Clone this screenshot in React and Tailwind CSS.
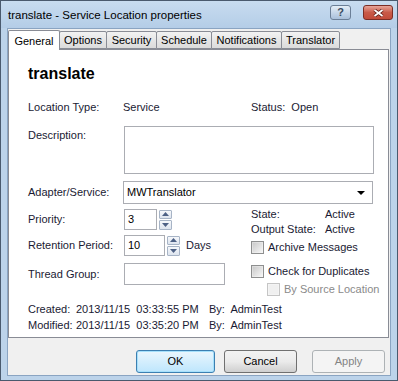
import React from 'react';

const font = { fontFamily: '"Liberation Sans", Arial, sans-serif' };

function Spinner() {
    return (
        <div className="flex flex-col ml-[2px] h-[20px] w-[13px] gap-[1px] shrink-0">
            <div className="flex-1 border border-[#a7b4c6] bg-gradient-to-b from-[#f6f8fb] to-[#dde4ee] flex items-center justify-center rounded-[1px]">
                <svg width="7" height="4" viewBox="0 0 7 4"><path d="M0 4 L3.5 0 L7 4 Z" fill="#4d6185" /></svg>
            </div>
            <div className="flex-1 border border-[#a7b4c6] bg-gradient-to-b from-[#f6f8fb] to-[#dde4ee] flex items-center justify-center rounded-[1px]">
                <svg width="7" height="4" viewBox="0 0 7 4"><path d="M0 0 L3.5 4 L7 0 Z" fill="#4d6185" /></svg>
            </div>
        </div>
    );
}

function Checkbox({ disabled }) {
    return (
        <div className={`w-[13px] h-[13px] shrink-0 border ${disabled ? 'border-[#c5c5c5] bg-[#f4f4f4]' : 'border-[#8e8f8f] bg-gradient-to-br from-[#d8d8d8] to-[#f8f8f8]'} p-[1px]`}>
            <div className={`w-full h-full ${disabled ? 'bg-[#f0f0f0]' : 'bg-gradient-to-br from-[#cbcbcb] to-[#f4f4f4]'}`}></div>
        </div>
    );
}

function Tab({ label, selected, width }) {
    if (selected) {
        return (
            <div className="h-[20px] -mb-[1px] border border-b-0 border-[#898c95] bg-white flex items-start pt-[2px] justify-center rounded-t-[2px] z-10 relative shrink-0" style={{ width }}>
                <span>{label}</span>
            </div>
        );
    }
    return (
        <div className="h-[18px] border border-[#898c95] bg-gradient-to-b from-[#f2f2f2] to-[#dbdbdb] flex items-center justify-center rounded-t-[2px] -ml-[1px] shrink-0" style={{ width }}>
            <span>{label}</span>
        </div>
    );
}

export default function App() {
    return (
        <div className="w-[398px] h-[381px] bg-[#bcd3ea] border border-[#4a5a6e] text-[11px] text-[#1a1a33] flex flex-col whitespace-nowrap" style={font}>
            {/* title bar */}
            <div className="h-[27px] flex items-start pl-[7px] pr-[4px] bg-gradient-to-b from-[#c8dcf0] to-[#b4cde7]">
                <span className="mt-[6px] text-[11.5px] text-black">translate - Service Location properties</span>
                <div className="ml-auto mt-[4px] flex gap-[12px]">
                    <div className="w-[21px] h-[15px] border border-[#6b7f97] rounded-[3px] bg-gradient-to-b from-[#e4eef8] to-[#a9c0da] flex items-center justify-center text-[11px] font-bold text-[#3a4a5e]">?</div>
                    <div className="w-[30px] h-[15px] border border-[#7a2d25] rounded-[3px] bg-gradient-to-b from-[#e7a59a] via-[#c85a48] to-[#c24b3a] flex items-center justify-center">
                        <svg width="11" height="8" viewBox="0 0 11 8">
                            <path d="M1.5 1 L9.5 7 M9.5 1 L1.5 7" stroke="#5a1a14" strokeWidth="3.4" />
                            <path d="M1.5 1 L9.5 7 M9.5 1 L1.5 7" stroke="#ffffff" strokeWidth="1.8" />
                        </svg>
                    </div>
                </div>
            </div>

            {/* client area */}
            <div className="flex-1 mx-[6px] mb-[4px] bg-[#f0f0f0] border border-[#8aa4c2] flex flex-col">
                {/* tabs */}
                <div className="flex items-end h-[20px] text-black">
                    <Tab label="General" selected width={52} />
                    <Tab label="Options" width={48} />
                    <Tab label="Security" width={51} />
                    <Tab label="Schedule" width={56} />
                    <Tab label="Notifications" width={71} />
                    <Tab label="Translator" width={59} />
                </div>

                {/* panel */}
                <div className="h-[289px] mr-[1px] border border-[#898c95] bg-white flex flex-col pl-[19px] pr-[16px]">
                    <div className="mt-[14px] h-[20px] text-[16px] font-bold text-black leading-[20px]">translate</div>

                    <div className="mt-[16px] h-[14px] flex items-center">
                        <span className="w-[95px] shrink-0">Location Type:</span>
                        <span className="w-[128px] shrink-0">Service</span>
                        <span>Status:&nbsp; Open</span>
                    </div>

                    <div className="mt-[12px] flex">
                        <span className="w-[96px] shrink-0 pt-[1px]">Description:</span>
                        <div className="w-[250px] h-[48px] border border-[#abadb3] bg-white shrink-0"></div>
                    </div>

                    <div className="mt-[7px] flex items-center">
                        <span className="w-[95px] shrink-0">Adapter/Service:</span>
                        <div className="w-[250px] h-[23px] border border-[#abadb3] bg-white flex items-center pl-[3px] pr-[7px] shrink-0">
                            <span className="text-black">MWTranslator</span>
                            <svg className="ml-auto" width="8" height="4" viewBox="0 0 8 4"><path d="M0 0 L8 0 L4 4 Z" fill="#000" /></svg>
                        </div>
                    </div>

                    <div className="mt-[5px] flex">
                        <div className="w-[223px] shrink-0 flex flex-col">
                            <div className="flex items-center h-[21px]">
                                <span className="w-[96px] shrink-0">Priority:</span>
                                <div className="w-[33px] h-[21px] border border-[#abadb3] flex items-center pl-[3px] text-black shrink-0">3</div>
                                <Spinner />
                            </div>
                            <div className="flex items-center h-[21px] mt-[5px]">
                                <span className="w-[96px] shrink-0">Retention Period:</span>
                                <div className="w-[41px] h-[21px] border border-[#abadb3] flex items-center pl-[3px] text-black shrink-0">10</div>
                                <Spinner />
                                <span className="ml-[6px]">Days</span>
                            </div>
                            <div className="flex items-center h-[22px] mt-[7px]">
                                <span className="w-[96px] shrink-0">Thread Group:</span>
                                <div className="w-[101px] h-[22px] border border-[#abadb3] shrink-0"></div>
                            </div>
                        </div>
                        <div className="flex flex-col -mt-[2px]">
                            <div className="flex h-[15px] items-center">
                                <span className="w-[74px]">State:</span><span>Active</span>
                            </div>
                            <div className="flex h-[15px] items-center">
                                <span className="w-[74px]">Output State:</span><span>Active</span>
                            </div>
                            <div className="flex items-center h-[14px] mt-[3px] gap-[4px]">
                                <Checkbox /><span>Archive Messages</span>
                            </div>
                            <div className="flex items-center h-[14px] mt-[10px] gap-[4px]">
                                <Checkbox /><span>Check for Duplicates</span>
                            </div>
                            <div className="flex items-center h-[14px] mt-[4px] ml-[16px] gap-[4px] text-[#8a8a8a]">
                                <Checkbox disabled /><span>By Source Location</span>
                            </div>
                        </div>
                    </div>

                    <div className="mt-[6px] flex h-[15px] items-center">
                        <span className="w-[48px] shrink-0">Created:</span>
                        <span className="w-[133px] shrink-0">2013/11/15&nbsp; 03:33:55 PM</span>
                        <span>By:&nbsp; AdminTest</span>
                    </div>
                    <div className="mt-[1px] flex h-[15px] items-center">
                        <span className="w-[48px] shrink-0">Modified:</span>
                        <span className="w-[133px] shrink-0">2013/11/15&nbsp; 03:35:20 PM</span>
                        <span>By:&nbsp; AdminTest</span>
                    </div>
                </div>

                {/* buttons */}
                <div className="flex justify-end items-center gap-[9px] mt-[12px] pr-[5px] text-black">
                    <div className="w-[79px] h-[23px] rounded-[3px] border border-[#3c7fb1] bg-gradient-to-b from-[#eaf6fd] to-[#bee6fd] flex items-center justify-center shadow-[inset_0_0_0_1px_#a6e0fb]">OK</div>
                    <div className="w-[73px] h-[23px] rounded-[3px] border border-[#707070] bg-gradient-to-b from-[#f2f2f2] via-[#ebebeb] to-[#cfcfcf] flex items-center justify-center">Cancel</div>
                    <div className="w-[73px] h-[23px] rounded-[3px] border border-[#adb2b5] bg-[#f4f4f4] flex items-center justify-center text-[#838383] ml-[6px]">Apply</div>
                </div>
            </div>
        </div>
    );
}
